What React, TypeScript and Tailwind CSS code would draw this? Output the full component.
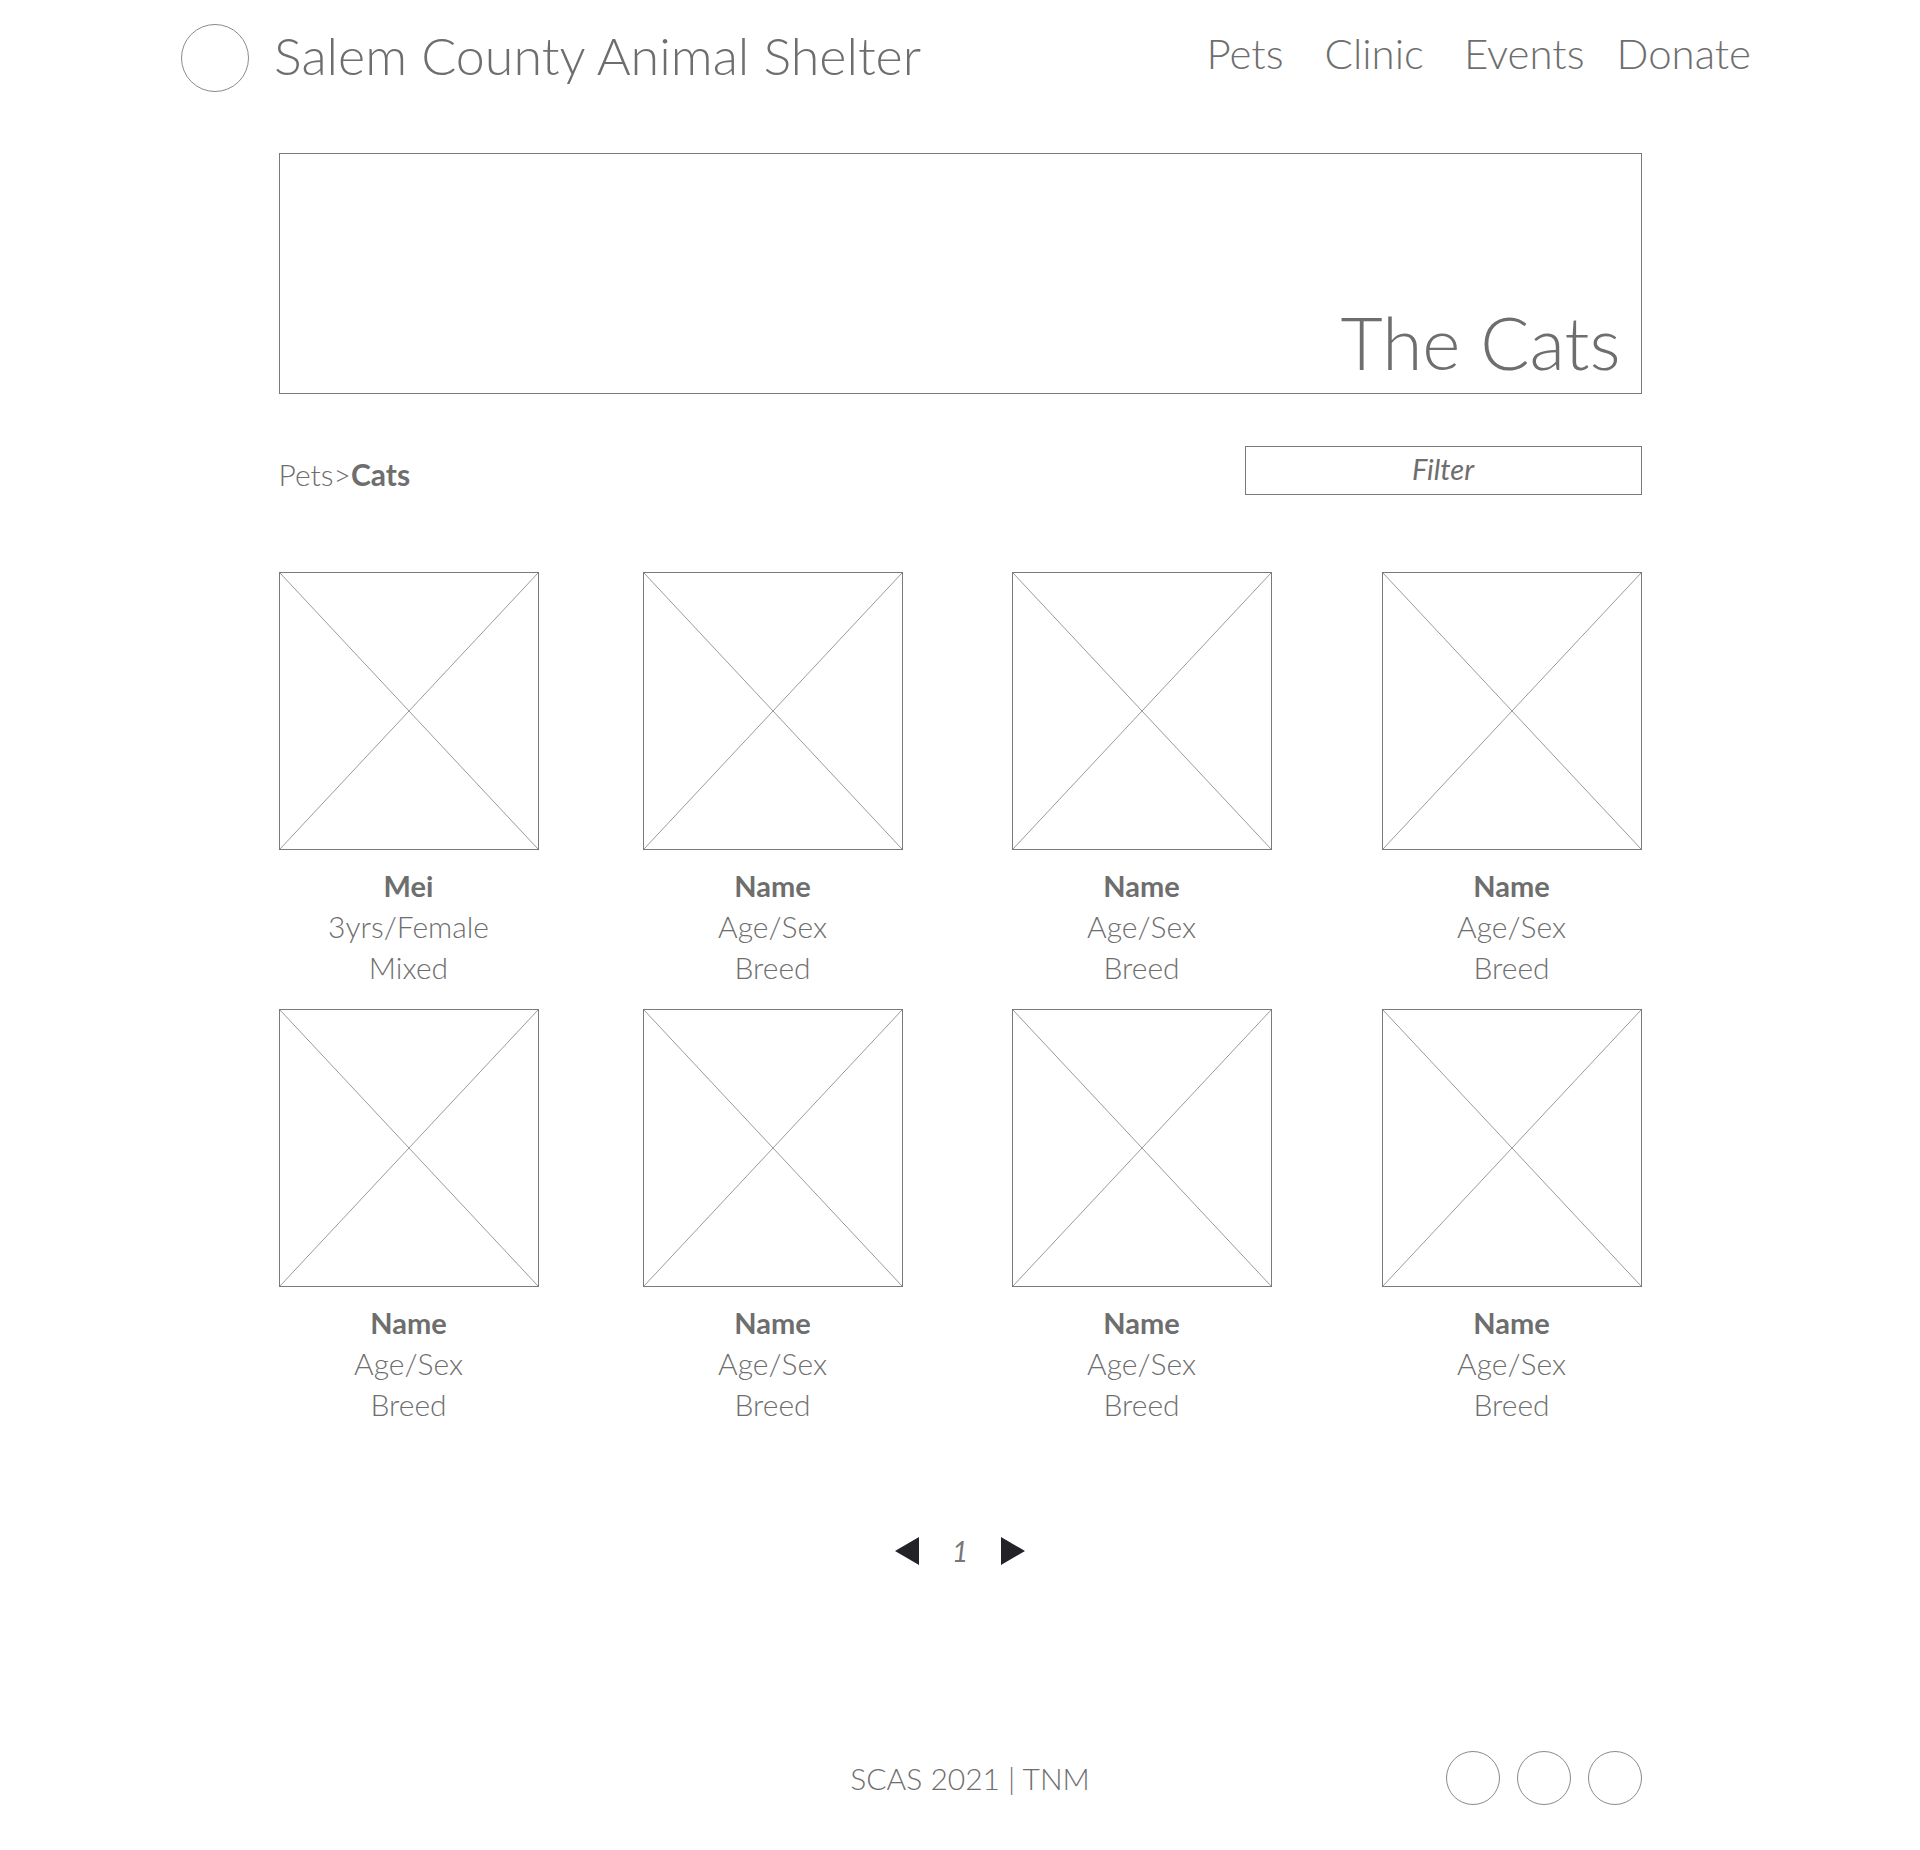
import React from "react";

type Pet = { name: string; info: string; breed: string };

const pets: Pet[] = [
  { name: "Mei", info: "3yrs/Female", breed: "Mixed" },
  { name: "Name", info: "Age/Sex", breed: "Breed" },
  { name: "Name", info: "Age/Sex", breed: "Breed" },
  { name: "Name", info: "Age/Sex", breed: "Breed" },
  { name: "Name", info: "Age/Sex", breed: "Breed" },
  { name: "Name", info: "Age/Sex", breed: "Breed" },
  { name: "Name", info: "Age/Sex", breed: "Breed" },
  { name: "Name", info: "Age/Sex", breed: "Breed" },
];

const font = { fontFamily: "Lato, 'Open Sans', sans-serif" };

const Placeholder: React.FC = () => (
  <div className="relative w-[260px] h-[278px] border border-[#7a7a7a]">
    <svg className="absolute inset-0 w-full h-full" viewBox="0 0 100 100" preserveAspectRatio="none">
      <line x1="0" y1="0" x2="100" y2="100" stroke="#9a9a9a" strokeWidth="1" vectorEffect="non-scaling-stroke" />
      <line x1="100" y1="0" x2="0" y2="100" stroke="#9a9a9a" strokeWidth="1" vectorEffect="non-scaling-stroke" />
    </svg>
  </div>
);

const PetCard: React.FC<{ pet: Pet }> = ({ pet }) => (
  <div className="flex flex-col items-center w-[260px]">
    <Placeholder />
    <div className="mt-[15px] text-center text-[30px] leading-[41px] text-[#6e6e6e]">
      <p className="font-bold text-[29px]">{pet.name}</p>
      <p className="font-light">{pet.info}</p>
      <p className="font-light">{pet.breed}</p>
    </div>
  </div>
);

const Row: React.FC<{ items: Pet[] }> = ({ items }) => (
  <div className="flex">
    <PetCard pet={items[0]} />
    <div className="ml-[104px]">
      <PetCard pet={items[1]} />
    </div>
    <div className="ml-[109px]">
      <PetCard pet={items[2]} />
    </div>
    <div className="ml-[110px]">
      <PetCard pet={items[3]} />
    </div>
  </div>
);

const App: React.FC = () => {
  return (
    <div className="bg-white min-h-[1850px] w-full text-[#6e6e6e]" style={font}>
      {/* header */}
      <header className="flex items-center justify-between pl-[181px] pr-[169px] pt-[24px]">
        <div className="flex items-center gap-[25px]">
          <div className="w-[68px] h-[68px] rounded-full border border-[#8a8a8a]" />
          <h1 className="text-[52px] font-light leading-none -mt-[7px]">Salem County Animal Shelter</h1>
        </div>
        <nav className="flex items-center text-[42px] font-light leading-none -mt-[10px]">
          <a>Pets</a>
          <a className="ml-[41px]">Clinic</a>
          <a className="ml-[40px]">Events</a>
          <a className="ml-[32px]">Donate</a>
        </nav>
      </header>

      <main className="w-[1363px] mx-auto">
        {/* hero */}
        <div className="mt-[61px] h-[241px] border border-[#7a7a7a] flex items-end justify-end pr-[20px] pb-[14px]">
          <h2 className="text-[73px] font-light leading-none">The Cats</h2>
        </div>

        {/* breadcrumb + filter */}
        <div className="mt-[52px] flex items-end justify-between">
          <p className="text-[30px] font-light leading-none pb-[6px]">
            Pets&gt;<span className="font-bold">Cats</span>
          </p>
          <div className="w-[397px] h-[49px] border border-[#7a7a7a] flex items-center justify-center">
            <span className="text-[29px] italic -mt-[3px]">Filter</span>
          </div>
        </div>

        {/* grid */}
        <div className="mt-[77px] flex flex-col gap-[21px]">
          <Row items={pets.slice(0, 4)} />
          <Row items={pets.slice(4, 8)} />
        </div>

        {/* pagination */}
        <div className="mt-[105px] flex items-center justify-center gap-[33px]">
          <svg width="24" height="28" viewBox="0 0 24 28">
            <polygon points="24,0 24,28 0,14" fill="#222326" />
          </svg>
          <span className="text-[28px] italic text-[#777]">1</span>
          <svg width="24" height="28" viewBox="0 0 24 28">
            <polygon points="0,0 0,28 24,14" fill="#222326" />
          </svg>
        </div>

        {/* footer */}
        <footer className="mt-[179px] grid grid-cols-3 items-center pb-[44px]">
          <div />
          <p className="text-center text-[30px] font-light pl-[20px] whitespace-nowrap">SCAS 2021 | TNM</p>
          <div className="flex justify-end gap-[17px]">
            <div className="w-[54px] h-[54px] rounded-full border border-[#8a8a8a]" />
            <div className="w-[54px] h-[54px] rounded-full border border-[#8a8a8a]" />
            <div className="w-[54px] h-[54px] rounded-full border border-[#8a8a8a]" />
          </div>
        </footer>
      </main>
    </div>
  );
};

export default App;
